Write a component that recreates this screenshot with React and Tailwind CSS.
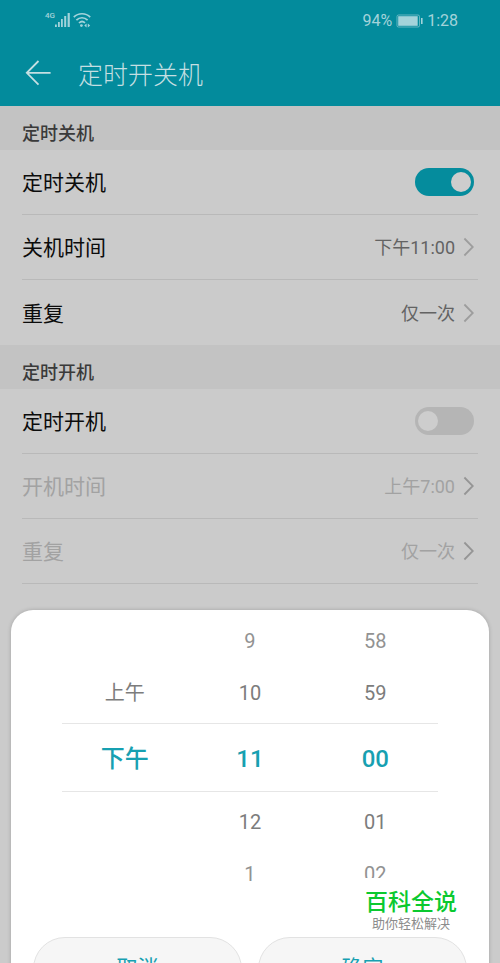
import { useState } from 'react';

const periods = ['', '上午', '下午', '', ''];
const hours = ['9', '10', '11', '12', '1'];
const minutes = ['58', '59', '00', '01', '02'];

function StatusBar() {
  return (
    <div className="flex h-10 items-center justify-between pr-[42px] pl-[45px] text-[#a3d3da]">
      <div className="flex items-center">
        <span className="-mt-2 text-[8px] leading-none font-medium">4G</span>
        <svg className="h-4 w-4" viewBox="0 0 16 16" fill="currentColor" aria-hidden="true">
          <rect x="0" y="12.5" width="1.8" height="2.5" />
          <rect x="3" y="10" width="1.8" height="5" />
          <rect x="6" y="7" width="1.8" height="8" />
          <rect x="9.2" y="4" width="2" height="11" />
          <rect x="12.6" y="1" width="2.2" height="14" />
        </svg>
        <svg className="ml-0.5 h-4 w-[18px]" viewBox="0 0 18 16" fill="none" stroke="currentColor" strokeWidth="1.7" aria-hidden="true">
          <path d="M0.8 5.2C5.2 0.6 12.8 0.6 17.2 5.2" />
          <path d="M3.4 8.2C6.6 4.9 11.4 4.9 14.6 8.2" />
          <path d="M6 11C7.8 9.2 10.2 9.2 12 10.8" />
          <circle cx="8.4" cy="13.6" r="1.4" fill="currentColor" stroke="none" />
          <path d="M13.6 11.4L11.2 13.5L13.6 15.6ZM14.8 11.4L17.2 13.5L14.8 15.6Z" fill="currentColor" stroke="none" />
        </svg>
      </div>

      <div className="flex items-center pt-px text-base leading-none">
        <span>94%</span>
        <svg className="mx-1 h-[14px] w-[27px]" viewBox="0 0 27 14" aria-hidden="true">
          <rect x="1" y="1" width="22.5" height="12" rx="1.5" fill="none" stroke="currentColor" strokeOpacity="0.6" />
          <rect x="2.2" y="2.2" width="19.5" height="9.6" fill="currentColor" />
          <rect x="25" y="4" width="1.6" height="6" fill="currentColor" />
        </svg>
        <span>1:28</span>
      </div>
    </div>
  );
}

function Section({ title, children }) {
  return (
    <section>
      <h2 className="flex h-11 items-center bg-[#c3c3c3] px-[22px] pt-3 text-lg leading-6 font-medium text-[#3a3a3a]">
        {title}
      </h2>
      <div className="px-[22px]">{children}</div>
    </section>
  );
}

function SwitchRow({ label, checked, onChange }) {
  return (
    <label className="flex h-[65px] items-center justify-between border-b border-[#b9b9b9] pr-1 text-[21px] text-[#0c0c0c]">
      <span className="pt-1">{label}</span>
      <input
        type="checkbox"
        role="switch"
        checked={checked}
        onChange={e => onChange(e.target.checked)}
        className="h-7 w-[59px] appearance-none rounded-full bg-[#b5b5b5] px-[3px] py-1 before:block before:size-5 before:rounded-full before:bg-[#cdcdcd] before:content-[''] checked:bg-[#058c9d] checked:before:ml-auto"
      />
    </label>
  );
}

function LinkRow({ label, value, disabled, last }) {
  return (
    <button
      type="button"
      disabled={disabled}
      className={`flex h-[65px] w-full items-center border-[#b9b9b9] text-[#0c0c0c] disabled:text-[#a2a2a2] ${last ? '' : 'border-b'}`}
    >
      <span className="flex-1 pt-1 text-left text-[21px]">{label}</span>
      <span className={`pt-0.5 text-lg ${disabled ? 'text-[#a2a2a2]' : 'text-[#636363]'}`}>{value}</span>
      <svg
        className={`mr-1 ml-2 h-5 w-[11px] ${disabled ? 'text-[#959595]' : 'text-[#9d9d9d]'}`}
        viewBox="0 0 11 20"
        fill="none"
        stroke="currentColor"
        strokeWidth="1.8"
        aria-hidden="true"
      >
        <path d="M1.4 1.5L9.8 10L1.4 18.5" />
      </svg>
    </button>
  );
}

function Wheel({ label, items }) {
  return (
    <div role="listbox" aria-label={label} className="flex-1 text-center">
      {items.map((item, index) => {
        // yang di tengah adalah nilai terpilih
        const selected = index === 2;
        const outer = index === 0 || index === 4;
        return (
          <div
            key={index}
            role="option"
            aria-selected={selected}
            className={
              selected
                ? 'my-1 flex h-[69px] items-center justify-center border-y border-[#e6e6e6] pt-0.5 text-2xl font-medium text-[#17a0b1]'
                : `flex h-[52px] items-center justify-center text-xl ${outer ? 'text-[#929292]' : 'text-[#7c7c7c]'}`
            }
          >
            {item}
          </div>
        );
      })}
    </div>
  );
}

export default function App() {
  const [powerOff, setPowerOff] = useState(true);
  const [powerOn, setPowerOn] = useState(false);

  return (
    <div className="relative h-screen overflow-hidden bg-[#cbcbcb] font-[Roboto,'Noto_Sans_CJK_SC',sans-serif]">
      <header className="bg-[#038b9c]">
        <StatusBar />
        <div className="flex h-[66px] items-center gap-[26px] px-[25px]">
          <button type="button" aria-label="返回" className="text-[#c5dfe2]">
            <svg className="size-[27px]" viewBox="0 0 27 27" fill="none" stroke="currentColor" strokeWidth="1.8" aria-hidden="true">
              <path d="M13.5 1L1.8 12.8L13.5 24.6M1.8 12.8H25.6" />
            </svg>
          </button>
          <h1 className="pt-1.5 text-[25px] leading-8 font-light text-[#c5dfe2]">定时开关机</h1>
        </div>
      </header>

      <main>
        <Section title="定时关机">
          <SwitchRow label="定时关机" checked={powerOff} onChange={setPowerOff} />
          <LinkRow label="关机时间" value="下午11:00" />
          <LinkRow label="重复" value="仅一次" last />
        </Section>
        <Section title="定时开机">
          <SwitchRow label="定时开机" checked={powerOn} onChange={setPowerOn} />
          <LinkRow label="开机时间" value="上午7:00" disabled={!powerOn} />
          <LinkRow label="重复" value="仅一次" disabled={!powerOn} />
        </Section>
      </main>

      {/* Dialog pilih waktu */}
      <div
        role="dialog"
        aria-label="关机时间"
        className="absolute inset-x-[11px] top-[610px] rounded-[22px] bg-white px-[22px] pt-[5px] pb-6 shadow-[0_0_4px_#00000033]"
      >
        <div className="flex px-[29px]">
          <Wheel label="上午/下午" items={periods} />
          <Wheel label="时" items={hours} />
          <Wheel label="分" items={minutes} />
        </div>

        <div className="mt-[37px] flex gap-4">
          <button type="button" className="h-16 flex-1 rounded-full border border-[#e2e2e2] bg-[#f6f6f6] text-[21px] text-[#17a0b1]">
            取消
          </button>
          <button type="button" className="h-16 flex-1 rounded-full border border-[#e2e2e2] bg-[#f6f6f6] text-[21px] text-[#17a0b1]">
            确定
          </button>
        </div>

        {/* Watermark */}
        <div className="absolute top-[268px] right-[28px] bg-white px-1 pt-3 text-center">
          <p className="text-[23px] leading-[26px] font-medium text-[#0bc92f]">百科全说</p>
          <p className="text-[13px] leading-4 text-[#8c8c8c]">助你轻松解决</p>
        </div>
      </div>
    </div>
  );
}
